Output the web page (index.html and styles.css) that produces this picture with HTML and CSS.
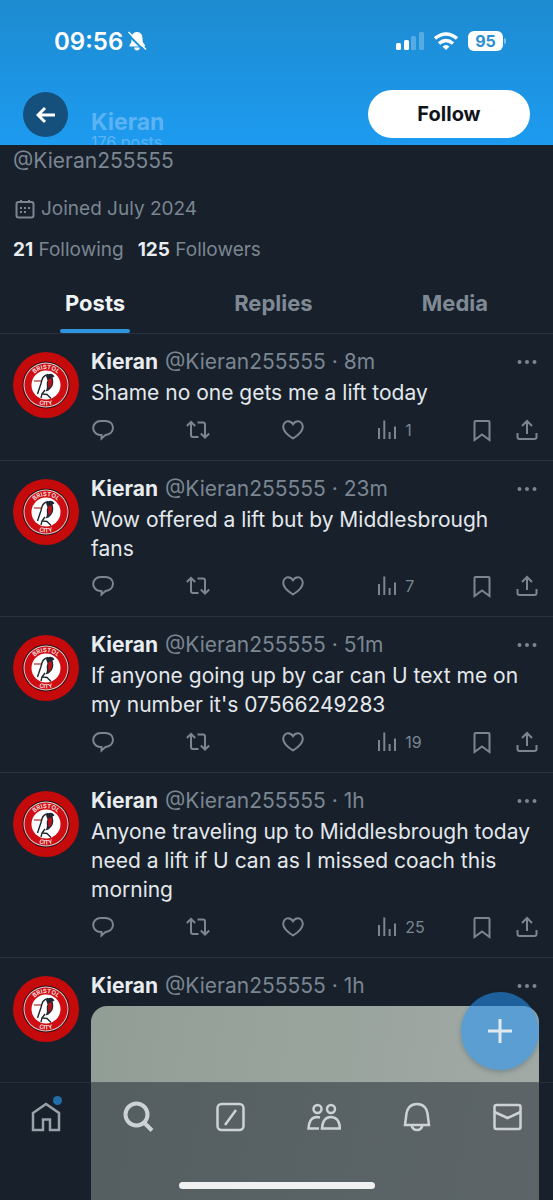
FILE: index.html
```html
<!DOCTYPE html>
<html lang="en">
<head>
  <meta charset="UTF-8">
  <meta name="viewport" content="width=device-width, initial-scale=1.0">
  <title>Kieran (@Kieran255555)</title>
  <link rel="stylesheet" href="styles.css">
</head>
<body>
  <svg class="sprite" aria-hidden="true">
    <symbol id="reply" viewBox="0 0 24 24">
      <path d="M9.500 3h5c4 0 7.500 2.600 7.500 6.600 0 4.300-3.500 7-7.500 7.400L10.500 20.500V17h-1C5.500 17 2.200 14 2.200 10S5.500 3 9.500 3z"/>
    </symbol>
    <symbol id="repost" viewBox="0 0 24 24">
      <path d="M.8 8L5 4l4.200 4M5 4.500V17q0 2 2 2H12.500M11.500 4.500h5.500q2 0 2 2V19M14.800 15.500l4.200 4 4.200-4"/>
    </symbol>
    <symbol id="like" viewBox="0 0 24 24">
      <path d="M12 20.500C5.500 16.500 2.200 13 2.200 8.800 2.200 5.600 4.500 3.300 7 3.300c2.200 0 3.900 1.200 5 3 1.100-1.800 2.800-3 5-3 2.500 0 4.800 2.300 4.800 5.500 0 4.200-3.300 7.700-9.800 11.700z"/>
    </symbol>
    <symbol id="views" viewBox="0 0 24 24">
      <path d="M4 21v-11M9.300 21V2.500M14.600 21v-7M20 21V8.500"/>
    </symbol>
    <symbol id="save" viewBox="0 0 24 24">
      <path d="M4.500 4q0-1 1-1h13q1 0 1 1v18L12 16.500 4.500 22z"/>
    </symbol>
    <symbol id="share" viewBox="0 0 24 24">
      <path d="M12 16V3.500M7 8l5-5 5 5M2.500 15v4q0 2 2 2h15q2 0 2-2v-4"/>
    </symbol>
    <symbol id="dots" viewBox="0 0 20 6">
      <circle cx="2.500" cy="3" r="2"/><circle cx="10" cy="3" r="2"/><circle cx="17.500" cy="3" r="2"/>
    </symbol>
    <symbol id="crest" viewBox="0 0 66 66">
      <circle cx="33" cy="33" r="33" fill="#c50a0b"/>
      <circle cx="33" cy="33" r="23.500" fill="#2b0b10"/>
      <circle cx="33" cy="33" r="22.500" fill="#dccdcd"/>
      <circle cx="33" cy="33" r="21.500" fill="#d00d12"/>
      <circle cx="33" cy="33" r="14.500" fill="#fff"/>
      <path id="arc-top" d="M17 33a16 16 0 0 1 32 0" fill="none"/>
      <path id="arc-bottom" d="M12.500 33a20.500 20.500 0 0 0 41 0" fill="none"/>
      <text class="crest-text"><textPath href="#arc-top" startOffset="50%">BRISTOL</textPath></text>
      <text class="crest-text"><textPath href="#arc-bottom" startOffset="50%">CITY</textPath></text>
      <path d="M21 29h7" stroke="#c0554f" stroke-width="1.500"/>
      <path d="M33 24q3-3.500 7-1.500l1.500 2-2 1c2 6 0 10-4 13l-3 1c3-5 0-7 2-11z" fill="#1f2630"/>
      <path d="M35.500 27q3-1.500 3.500 1c.5 5-1 7-3.500 8.500 0-3-1-5 0-9.500z" fill="#b5121b"/>
      <path d="M35 22.500c-5 1-6 4-7 9L24.500 42M32 38l-3 4 5 .5 4 4M29 42l-1 4" fill="none" stroke="#1f2630" stroke-width="1.400"/>
    </symbol>
  </svg>

  <div class="screen">
    <header class="top">
      <div class="status">
        <span class="time">09:56</span>
        <svg class="muted" viewBox="0 0 20 20">
          <path fill="#fff" d="M10 1c4 0 5.500 3 5.500 6.500 0 4 1 5 2.500 6.500v1.500H2.500V14C4 12.500 4.500 11.500 4.500 7.500 4.500 4 6 1 10 1zM7 16.500h6q-.5 3-3 3t-3-3z"/>
          <path stroke="#1d90d9" stroke-width="2" d="M0 2.500l17 17"/>
          <path stroke="#fff" stroke-width="1.500" d="M1.500 1L19 18.500"/>
        </svg>
        <div class="signals">
          <svg class="bars" viewBox="0 0 28 18">
            <g fill="#fff"><rect y="11" width="5" height="7" rx="1.500"/><rect x="8" y="8" width="5" height="10" rx="1.500"/></g>
            <g fill="#fff" opacity=".25"><rect x="15" y="4" width="5" height="14" rx="1.500"/><rect x="23" width="5" height="18" rx="1.500"/></g>
          </svg>
          <svg class="wifi" viewBox="0 0 24 18">
            <g fill="none" stroke="#fff" stroke-width="3.500"><path d="M1 6.500q11-9 22 0"/><path d="M5 11.500q7-6 14 0"/></g>
            <path fill="#fff" d="M8.500 14.500q3.500-3 7 0L12 18z"/>
          </svg>
          <span class="battery">95</span>
        </div>
      </div>
      <div class="bar">
        <button class="back" aria-label="Back">
          <svg viewBox="0 0 20 20"><path d="M19 10H2M9 3l-7 7 7 7"/></svg>
        </button>
        <div class="title">
          <div class="title-name">Kieran</div>
          <div class="title-count">176 posts</div>
        </div>
        <button class="follow">Follow</button>
      </div>
    </header>

    <section class="profile">
      <div class="profile-handle">@Kieran255555</div>
      <div class="joined">
        <svg viewBox="0 0 20 20">
          <path d="M3.500 3h13q2 0 2 2v11.500q0 2-2 2h-13q-2 0-2-2V5q0-2 2-2zM6 1v3M14 1v3"/>
          <path stroke-dasharray="2 2" d="M5 9h10M5 13h7"/>
        </svg>
        <span>Joined July 2024</span>
      </div>
      <div class="counts">
        <a href="#"><b>21</b> Following</a>
        <a href="#"><b>125</b> Followers</a>
      </div>
    </section>

    <nav class="tabs">
      <a href="#" class="active">Posts</a>
      <a href="#">Replies</a>
      <a href="#">Media</a>
    </nav>

    <main class="feed">
      <article class="post">
        <svg class="avatar"><use href="#crest"/></svg>
        <div class="content">
          <div class="head">
            <b>Kieran</b><span>@Kieran255555 · 8m</span>
            <button class="more" aria-label="More"><svg><use href="#dots"/></svg></button>
          </div>
          <p>Shame no one gets me a lift today</p>
          <div class="actions">
            <button aria-label="Reply"><svg><use href="#reply"/></svg></button>
            <button aria-label="Repost"><svg><use href="#repost"/></svg></button>
            <button aria-label="Like"><svg><use href="#like"/></svg></button>
            <button aria-label="Views"><svg><use href="#views"/></svg>1</button>
            <div class="right">
              <button aria-label="Bookmark"><svg><use href="#save"/></svg></button>
              <button aria-label="Share"><svg><use href="#share"/></svg></button>
            </div>
          </div>
        </div>
      </article>

      <article class="post">
        <svg class="avatar"><use href="#crest"/></svg>
        <div class="content">
          <div class="head">
            <b>Kieran</b><span>@Kieran255555 · 23m</span>
            <button class="more" aria-label="More"><svg><use href="#dots"/></svg></button>
          </div>
          <p>Wow offered a lift but by Middlesbrough fans</p>
          <div class="actions">
            <button aria-label="Reply"><svg><use href="#reply"/></svg></button>
            <button aria-label="Repost"><svg><use href="#repost"/></svg></button>
            <button aria-label="Like"><svg><use href="#like"/></svg></button>
            <button aria-label="Views"><svg><use href="#views"/></svg>7</button>
            <div class="right">
              <button aria-label="Bookmark"><svg><use href="#save"/></svg></button>
              <button aria-label="Share"><svg><use href="#share"/></svg></button>
            </div>
          </div>
        </div>
      </article>

      <article class="post">
        <svg class="avatar"><use href="#crest"/></svg>
        <div class="content">
          <div class="head">
            <b>Kieran</b><span>@Kieran255555 · 51m</span>
            <button class="more" aria-label="More"><svg><use href="#dots"/></svg></button>
          </div>
          <p>If anyone going up by car can U text me on my number it's 07566249283</p>
          <div class="actions">
            <button aria-label="Reply"><svg><use href="#reply"/></svg></button>
            <button aria-label="Repost"><svg><use href="#repost"/></svg></button>
            <button aria-label="Like"><svg><use href="#like"/></svg></button>
            <button aria-label="Views"><svg><use href="#views"/></svg>19</button>
            <div class="right">
              <button aria-label="Bookmark"><svg><use href="#save"/></svg></button>
              <button aria-label="Share"><svg><use href="#share"/></svg></button>
            </div>
          </div>
        </div>
      </article>

      <article class="post">
        <svg class="avatar"><use href="#crest"/></svg>
        <div class="content">
          <div class="head">
            <b>Kieran</b><span>@Kieran255555 · 1h</span>
            <button class="more" aria-label="More"><svg><use href="#dots"/></svg></button>
          </div>
          <p>Anyone traveling up to Middlesbrough today need a lift if U can as I missed coach this morning</p>
          <div class="actions">
            <button aria-label="Reply"><svg><use href="#reply"/></svg></button>
            <button aria-label="Repost"><svg><use href="#repost"/></svg></button>
            <button aria-label="Like"><svg><use href="#like"/></svg></button>
            <button aria-label="Views"><svg><use href="#views"/></svg>25</button>
            <div class="right">
              <button aria-label="Bookmark"><svg><use href="#save"/></svg></button>
              <button aria-label="Share"><svg><use href="#share"/></svg></button>
            </div>
          </div>
        </div>
      </article>

      <article class="post last">
        <svg class="avatar"><use href="#crest"/></svg>
        <div class="content">
          <div class="head">
            <b>Kieran</b><span>@Kieran255555 · 1h</span>
            <button class="more" aria-label="More"><svg><use href="#dots"/></svg></button>
          </div>
          <div class="media"></div>
        </div>
      </article>
    </main>

    <button class="compose" aria-label="New post">
      <svg viewBox="0 0 24 24"><path d="M12 0v24M0 12h24"/></svg>
    </button>

    <nav class="bottom">
      <div class="bottom-links">
        <a href="#" class="home" aria-label="Home">
          <svg viewBox="0 0 32 32"><path d="M3 12L16 3l13 9v17h-9V18.500h-7V29H3z"/></svg>
        </a>
        <a href="#" aria-label="Search">
          <svg viewBox="0 0 32 32" class="thick"><circle cx="14.500" cy="13.500" r="11"/><path d="M22 21.500l8 8"/></svg>
        </a>
        <a href="#" aria-label="Grok">
          <svg viewBox="0 0 32 32"><rect x="3.500" y="3" width="26" height="26" rx="4"/><path d="M11 24L22 9"/></svg>
        </a>
        <a href="#" aria-label="Communities">
          <svg viewBox="0 0 36 32" class="wide"><circle cx="12.500" cy="8" r="4"/><circle cx="26" cy="8" r="4"/><path d="M15 16.500l-3-.5c-5 0-8 4-8.500 11.500H14M17 27.500c.5-7.500 4-11.500 9-11.500s8.500 4 9 11.500z"/></svg>
        </a>
        <a href="#" aria-label="Notifications">
          <svg viewBox="0 0 32 32"><path d="M18 3C11.500 3 8 7.500 7.500 12.500L6 24h24l-1.500-11.500C28 7.500 24.500 3 18 3zM12.500 24q1 5 5.500 5t5.500-5"/></svg>
        </a>
        <a href="#" aria-label="Messages">
          <svg viewBox="0 0 32 32"><rect x="3.500" y="4" width="26" height="24" rx="2"/><path d="M3.500 11l13 6 13-6"/></svg>
        </a>
      </div>
      <div class="indicator"></div>
    </nav>
  </div>
</body>
</html>
```
FILE: styles.css
```css
* {
  box-sizing: border-box;
}

body {
  margin: 0;
  background-color: #17202b;
  color: #e4e8ec;
  font-family: Inter, "Liberation Sans", sans-serif;
  font-size: 21px;
}

a {
  color: inherit;
  text-decoration: none;
}

button {
  padding: 0;
  border: none;
  background: none;
  color: inherit;
  font-family: inherit;
  cursor: pointer;
}

.sprite {
  position: absolute;
  width: 0;
  height: 0;
}

.screen {
  position: relative;
  display: flex;
  flex-direction: column;
  height: 100vh;
  overflow: hidden;
}

/* header */
.top {
  height: 145px;
  flex-shrink: 0;
  overflow: hidden;
  background: linear-gradient(#1d8bd0, #1d9bf0);
}

.status {
  display: flex;
  align-items: center;
  height: 82px;
  padding: 0 50px 0 54px;
  color: #fff;
}

.time {
  font-size: 24px;
  font-weight: 600;
}

.muted {
  width: 20px;
  height: 20px;
  margin-left: 4px;
}

.signals {
  display: flex;
  align-items: center;
  gap: 10px;
  margin-left: auto;
}

.bars {
  width: 28px;
  height: 18px;
}

.wifi {
  width: 24px;
  height: 18px;
}

.battery {
  position: relative;
  width: 35px;
  border-radius: 6px;
  background-color: #fff;
  color: #2b8fd0;
  font-size: 16px;
  font-weight: 700;
  line-height: 20px;
  text-align: center;
}

.battery::after {
  content: "";
  position: absolute;
  top: 7px;
  right: -3px;
  width: 2px;
  height: 6px;
  border-radius: 0 2px 2px 0;
  background-color: #7fc0ee;
}

.bar {
  display: flex;
  align-items: flex-start;
  padding: 8px 23px 0;
}

.back {
  width: 45px;
  height: 45px;
  margin-top: 2px;
  border-radius: 50%;
  background-color: #14507b;
}

.back svg {
  width: 20px;
  height: 20px;
  vertical-align: middle;
  fill: none;
  stroke: #fff;
  stroke-width: 3;
}

.title {
  flex: 1;
  padding: 20px 0 0 23px;
  color: #5cb3f3;
}

.title-name {
  font-size: 23px;
  font-weight: 700;
  line-height: 24px;
}

.title-count {
  font-size: 16px;
  line-height: 16px;
}

.follow {
  width: 162px;
  height: 48px;
  border-radius: 24px;
  background-color: #fff;
  color: #10151b;
  font-size: 20px;
  font-weight: 700;
}

/* profile */
.profile {
  padding: 4px 13px 0;
  color: #7b8691;
  font-size: 19px;
}

.profile-handle {
  font-size: 21px;
  line-height: 24px;
}

.joined {
  display: flex;
  align-items: center;
  gap: 6px;
  margin-top: 24px;
  line-height: 24px;
}

.joined svg {
  width: 20px;
  height: 20px;
  margin-left: 2px;
  fill: none;
  stroke: #7b8691;
  stroke-width: 2;
}

.counts {
  display: flex;
  gap: 14px;
  margin-top: 17px;
  line-height: 24px;
}

.counts b {
  color: #e9edf0;
}

.tabs {
  display: flex;
  height: 72px;
  flex-shrink: 0;
  justify-content: space-between;
  padding: 0 60px;
  border-bottom: 1px solid #27323e;
  color: #7f8a95;
  font-size: 22px;
  font-weight: 700;
  line-height: 82px;
}

.tabs a {
  position: relative;
  padding: 0 5px;
}

.tabs .active {
  color: #f0f3f5;
}

.tabs .active::after {
  content: "";
  position: absolute;
  right: 0;
  bottom: 0;
  left: 0;
  height: 4px;
  border-radius: 2px;
  background-color: #2e94de;
}

/* posts */
.feed {
  display: flex;
  flex: 1;
  flex-direction: column;
}

.post {
  display: flex;
  gap: 12px;
  padding: 18px 14px 18px 13px;
  border-bottom: 1px solid #27323e;
}

.avatar {
  width: 66px;
  height: 66px;
  flex-shrink: 0;
}

.crest-text {
  fill: #f3dede;
  font-size: 6px;
  font-weight: 700;
  text-anchor: middle;
}

.content {
  flex: 1;
  min-width: 0;
}

.head {
  display: flex;
  gap: 7px;
  color: #7b8691;
  line-height: 20px;
}

.head b {
  color: #e9edf0;
}

.more {
  height: 20px;
  margin-left: auto;
}

.more svg {
  display: block;
  width: 20px;
  height: 6px;
  margin-right: 2px;
  fill: #7b8691;
}

.post p {
  margin: 6px 0 11px;
  padding-right: 6px;
  line-height: 29px;
}

.actions {
  display: grid;
  grid-template-columns: repeat(4, 1fr) auto;
  color: #7b8691;
}

.actions button {
  display: flex;
  align-items: center;
  gap: 6px;
  height: 24px;
  font-size: 16px;
}

.actions svg {
  width: 24px;
  height: 24px;
  fill: none;
  stroke: #7b8691;
  stroke-width: 2;
}

.right {
  display: flex;
  gap: 21px;
}

.last {
  flex: 1;
  padding-bottom: 0;
  border-bottom: none;
}

.last .content {
  display: flex;
  flex-direction: column;
}

.media {
  flex: 1;
  margin-top: 10px;
  border-radius: 16px 16px 0 0;
  background: linear-gradient(100deg, #919e96, #a2aaa5);
}

/* floating button and bottom bar lie over the feed */
.compose {
  position: absolute;
  right: 14px;
  bottom: 130px;
  width: 78px;
  height: 78px;
  border-radius: 50%;
  background-color: rgba(34, 149, 250, 0.55);
  box-shadow: 0 2px 5px rgba(20, 60, 90, 0.3);
}

.compose svg {
  width: 24px;
  height: 24px;
  vertical-align: middle;
  stroke: #dfe9f0;
  stroke-width: 3;
}

.bottom {
  position: absolute;
  right: 0;
  bottom: 0;
  left: 0;
  height: 118px;
  border-top: 1px solid rgba(120, 135, 150, 0.15);
  background-color: rgba(23, 32, 43, 0.5);
}

.bottom-links {
  display: flex;
  padding-top: 18px;
}

.bottom-links a {
  position: relative;
  flex: 1;
  text-align: center;
}

.bottom-links svg {
  width: 32px;
  height: 32px;
  fill: none;
  stroke: #cdd3d5;
  stroke-width: 2.5;
}

.bottom-links .wide {
  width: 36px;
}

.bottom-links .thick {
  stroke-width: 4;
}

.bottom-links .home svg {
  stroke: #99a1a9;
}

.home::after {
  content: "";
  position: absolute;
  top: -5px;
  left: calc(50% + 7px);
  width: 9px;
  height: 9px;
  border-radius: 50%;
  background-color: #226eaa;
}

.indicator {
  width: 196px;
  height: 7px;
  margin: 44px auto 0;
  border-radius: 4px;
  background-color: #eff0f0;
}
```
